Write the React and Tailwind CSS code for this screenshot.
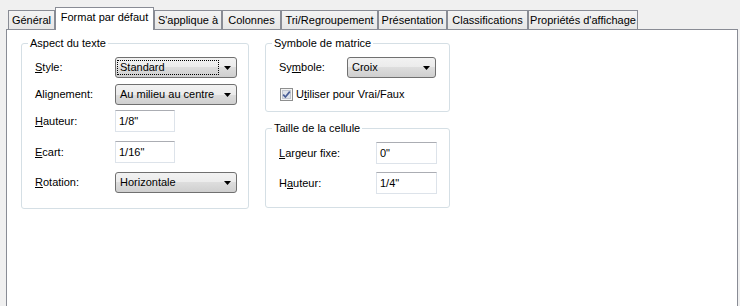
import React from "react";

const tabs = [
  { label: "Général", w: "w-[47px]" },
  { label: "Format par défaut", w: "w-[99px]", active: true },
  { label: "S'applique à", w: "w-[68px]" },
  { label: "Colonnes", w: "w-[59px]" },
  { label: "Tri/Regroupement", w: "w-[97px]" },
  { label: "Présentation", w: "w-[69px]" },
  { label: "Classifications", w: "w-[81px]" },
  { label: "Propriétés d'affichage", w: "w-[110px]" },
];

/* combobox, vista look */
function Combo({ value, w, focus }) {
  return (
    <div className={`flex items-center h-[21px] rounded-[3px] border border-[#707070] bg-[linear-gradient(to_bottom,#f2f2f2_0%,#ebebeb_50%,#dddddd_50%,#cfcfcf_100%)] ${w}`}>
      <span
        className={`flex-1 ml-px pl-[2px] h-[15px] leading-[13px] border ${
          focus ? "border-dotted border-black" : "border-transparent"
        }`}
      >
        {value}
      </span>
      <span className="w-[17px] flex items-center justify-center">
        <svg width="7" height="4" viewBox="0 0 7 4">
          <path d="M0 0h7L3.5 4z" fill="#000" />
        </svg>
      </span>
    </div>
  );
}

function TextBox({ value, w }) {
  return (
    <div className={`h-[22px] flex items-center pl-[3px] bg-white border border-[#dde3ea] border-t-[#abadb3] ${w}`}>
      {value}
    </div>
  );
}

function Group({ title, className, children }) {
  return (
    <fieldset className={`border border-[#d5dfe5] rounded-[3px] ${className}`}>
      <legend className="ml-[6px] px-[2px] leading-[13px]">{title}</legend>
      {children}
    </fieldset>
  );
}

export default function App() {
  return (
    <div className="w-[740px] h-[306px] bg-[#f0f0f0] overflow-hidden flex flex-col font-['Liberation_Sans',Arial,sans-serif] text-[11px] text-black">
      {/* tab strip */}
      <div className="h-[29px] flex items-end pl-[8px]">
        {tabs.map((t) =>
          t.active ? (
            <div
              key={t.label}
              className={`${t.w} h-[23px] -mb-px relative z-10 bg-white border-x border-t border-[#898c95] flex items-center justify-center pb-[3px]`}
            >
              {t.label}
            </div>
          ) : (
            <div
              key={t.label}
              className={`${t.w} h-[19px] bg-[linear-gradient(to_bottom,#f3f3f3,#e6e6e6)] border-x border-t border-[#898c95] flex items-center justify-center`}
            >
              {t.label}
            </div>
          )
        )}
      </div>

      {/* page */}
      <div className="flex-1 ml-[6px] w-[732px] bg-white border-x border-t border-[#898c95] pl-[14px] pt-[7px] flex gap-[16px] items-start">
        <Group title="Aspect du texte" className="w-[228px] h-[172px]">
          <div className="flex flex-col pl-[13px] pt-[7px]">
            <div className="flex items-center">
              <span className="w-[80px]"><span className="underline">S</span>tyle:</span>
              <Combo value="Standard" w="w-[122px]" focus />
            </div>
            <div className="flex items-center mt-[6px]">
              <span className="w-[80px]">Alignement:</span>
              <Combo value="Au milieu au centre" w="w-[122px]" />
            </div>
            <div className="flex items-center mt-[5px]">
              <span className="w-[80px]"><span className="underline">H</span>auteur:</span>
              <TextBox value={'1/8"'} w="w-[60px]" />
            </div>
            <div className="flex items-center mt-[9px]">
              <span className="w-[80px]"><span className="underline">E</span>cart:</span>
              <TextBox value={'1/16"'} w="w-[60px]" />
            </div>
            <div className="flex items-center mt-[9px]">
              <span className="w-[80px]"><span className="underline">R</span>otation:</span>
              <Combo value="Horizontale" w="w-[122px]" />
            </div>
          </div>
        </Group>

        <div className="w-[185px] flex flex-col gap-[10px]">
          <Group title="Symbole de matrice" className="h-[75px]">
            <div className="flex flex-col pl-[13px] pt-[7px]">
              <div className="flex items-center">
                <span className="w-[68px]">Sy<span className="underline">m</span>bole:</span>
                <Combo value="Croix" w="w-[89px]" />
              </div>
              <label className="flex items-center gap-[3px] mt-[8px] ml-px">
                <svg width="13" height="13" viewBox="0 0 13 13">
                  <rect x="0.5" y="0.5" width="12" height="12" fill="#f4f4f4" stroke="#8e8f8f" />
                  <rect x="2.5" y="2.5" width="8" height="8" fill="#dfe3ea" stroke="#c2c7d0" />
                  <path d="M3.2 6.6 L5.4 9 L9.8 3.6" fill="none" stroke="#4a5f97" strokeWidth="1.7" />
                </svg>
                <span>U<span className="underline">t</span>iliser pour Vrai/Faux</span>
              </label>
            </div>
          </Group>

          <Group title="Taille de la cellule" className="h-[86px]">
            <div className="flex flex-col pl-[13px] pt-[7px]">
              <div className="flex items-center">
                <span className="w-[97px]"><span className="underline">L</span>argeur fixe:</span>
                <TextBox value={'0"'} w="w-[61px]" />
              </div>
              <div className="flex items-center mt-[8px]">
                <span className="w-[97px]">H<span className="underline">a</span>uteur:</span>
                <TextBox value={'1/4"'} w="w-[61px]" />
              </div>
            </div>
          </Group>
        </div>
      </div>
    </div>
  );
}
